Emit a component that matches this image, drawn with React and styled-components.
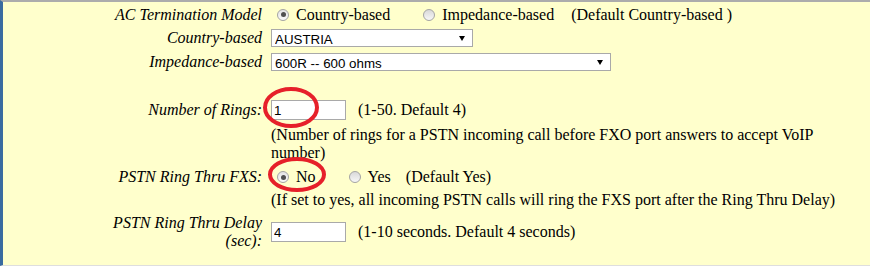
import styled, { createGlobalStyle } from "styled-components";

const GlobalStyle = createGlobalStyle`
  html, body {
    margin: 0;
    padding: 0;
    background: #ffffff;
  }
`;

const Panel = styled.div`
  position: relative;
  box-sizing: content-box;
  width: calc(870px - 3px - 104px);
  background: #ffffcc;
  border-top: 2px solid #acacac;
  border-left: 3px solid #3a6b9f;
  border-bottom: 1px solid #dedede;
  padding: 0 0 13px 104px;
  font: 16px "Liberation Serif", "Times New Roman", serif;
  color: #000;
`;

const Row = styled.div`
  display: grid;
  grid-template-columns: 155px 1fr;
  column-gap: 9px;
  align-items: center;
  height: ${(p) => p.h}px;
`;

const Label = styled.div`
  text-align: right;
  font-style: italic;
  line-height: 18px;
`;

const Controls = styled.div`
  display: flex;
  align-items: center;
  grid-column: 2;
  line-height: 18px;
  white-space: nowrap;
`;

const Hint = styled.div`
  grid-column: 2;
  line-height: 18px;
  max-width: ${(p) => (p.$max ? `${p.$max}px` : "none")};
  white-space: ${(p) => (p.$max ? "normal" : "nowrap")};
`;

const Note = styled.span`
  margin-left: ${(p) => p.$ml || 0}px;
`;

const Option = styled.label`
  display: flex;
  align-items: center;
  margin-left: ${(p) => p.$ml || 0}px;
`;

const Radio = styled.input.attrs({ type: "radio" })`
  appearance: none;
  box-sizing: border-box;
  width: 12px;
  height: 12px;
  margin: 0 7px 0 6px;
  border-radius: 50%;
  border: 1px solid #a4a4a4;
  background: linear-gradient(#d9d9d9, #f7f7f7);
  display: inline-grid;
  place-items: center;

  &:checked {
    background: linear-gradient(#e4e4e4, #fafafa);
  }

  &:checked::after {
    content: "";
    width: 5px;
    height: 5px;
    border-radius: 50%;
    background: #505050;
  }
`;

const SelectBox = styled.div`
  position: relative;
  box-sizing: border-box;
  width: ${(p) => p.$w}px;
  height: 18px;
  border: 1px solid #a9a9a9;
  background: #fff;

  &::after {
    content: "";
    position: absolute;
    right: 7px;
    top: 6px;
    border-left: 3px solid transparent;
    border-right: 3px solid transparent;
    border-top: 5px solid #000;
  }
`;

const Select = styled.select`
  appearance: none;
  width: 100%;
  height: 100%;
  border: none;
  outline: none;
  background: transparent;
  padding: 0 0 0 3px;
  margin: 0;
  font: 13.33px "Liberation Sans", Arial, sans-serif;
  color: #000;
`;

const TextInput = styled.input`
  box-sizing: border-box;
  width: 75px;
  height: 20px;
  margin: 0;
  padding: 1px 2px;
  border: 1px solid #a9a9a9;
  background: #fff;
  font: 13.33px "Liberation Sans", Arial, sans-serif;
  color: #000;
`;

const Marks = styled.svg`
  position: absolute;
  left: -3px;
  top: -2px;
  pointer-events: none;
`;

export default function App() {
  return (
    <>
      <GlobalStyle />
      <Panel>
        <Row h={25}>
          <Label>AC Termination Model</Label>
          <Controls>
            <Option>
              <Radio name="ac" defaultChecked />
              Country-based
            </Option>
            <Option $ml={27}>
              <Radio name="ac" />
              Impedance-based
            </Option>
            <Note $ml={17}>(Default Country-based )</Note>
          </Controls>
        </Row>
        <Row h={22}>
          <Label>Country-based</Label>
          <Controls>
            <SelectBox $w={202}>
              <Select defaultValue="AUSTRIA">
                <option>AUSTRIA</option>
              </Select>
            </SelectBox>
          </Controls>
        </Row>
        <Row h={26}>
          <Label>Impedance-based</Label>
          <Controls>
            <SelectBox $w={340}>
              <Select defaultValue="600R -- 600 ohms">
                <option>600R -- 600 ohms</option>
              </Select>
            </SelectBox>
          </Controls>
        </Row>
        <Row h={23} />
        <Row h={24}>
          <Label>Number of Rings:</Label>
          <Controls>
            <TextInput defaultValue="1" />
            <Note $ml={12}>(1-50. Default 4)</Note>
          </Controls>
        </Row>
        <Row h={44}>
          <Hint $max={552}>
            (Number of rings for a PSTN incoming call before FXO port answers to
            accept VoIP number)
          </Hint>
        </Row>
        <Row h={22}>
          <Label>PSTN Ring Thru FXS:</Label>
          <Controls>
            <Option>
              <Radio name="fxs" defaultChecked />
              No
            </Option>
            <Option $ml={27}>
              <Radio name="fxs" />
              Yes
            </Option>
            <Note $ml={15}>(Default Yes)</Note>
          </Controls>
        </Row>
        <Row h={24}>
          <Hint>
            (If set to yes, all incoming PSTN calls will ring the FXS port after
            the Ring Thru Delay)
          </Hint>
        </Row>
        <Row h={40}>
          <Label>PSTN Ring Thru Delay (sec):</Label>
          <Controls>
            <TextInput defaultValue="4" />
            <Note $ml={12}>(1-10 seconds. Default 4 seconds)</Note>
          </Controls>
        </Row>

        <Marks width="870" height="266" viewBox="0 0 870 266">
          <ellipse
            cx="291"
            cy="107.5"
            rx="26"
            ry="18.5"
            fill="none"
            stroke="#e6202a"
            strokeWidth="4"
          />
          <ellipse
            cx="297"
            cy="174.5"
            rx="27"
            ry="15.5"
            fill="none"
            stroke="#e6202a"
            strokeWidth="4"
          />
        </Marks>
      </Panel>
    </>
  );
}
